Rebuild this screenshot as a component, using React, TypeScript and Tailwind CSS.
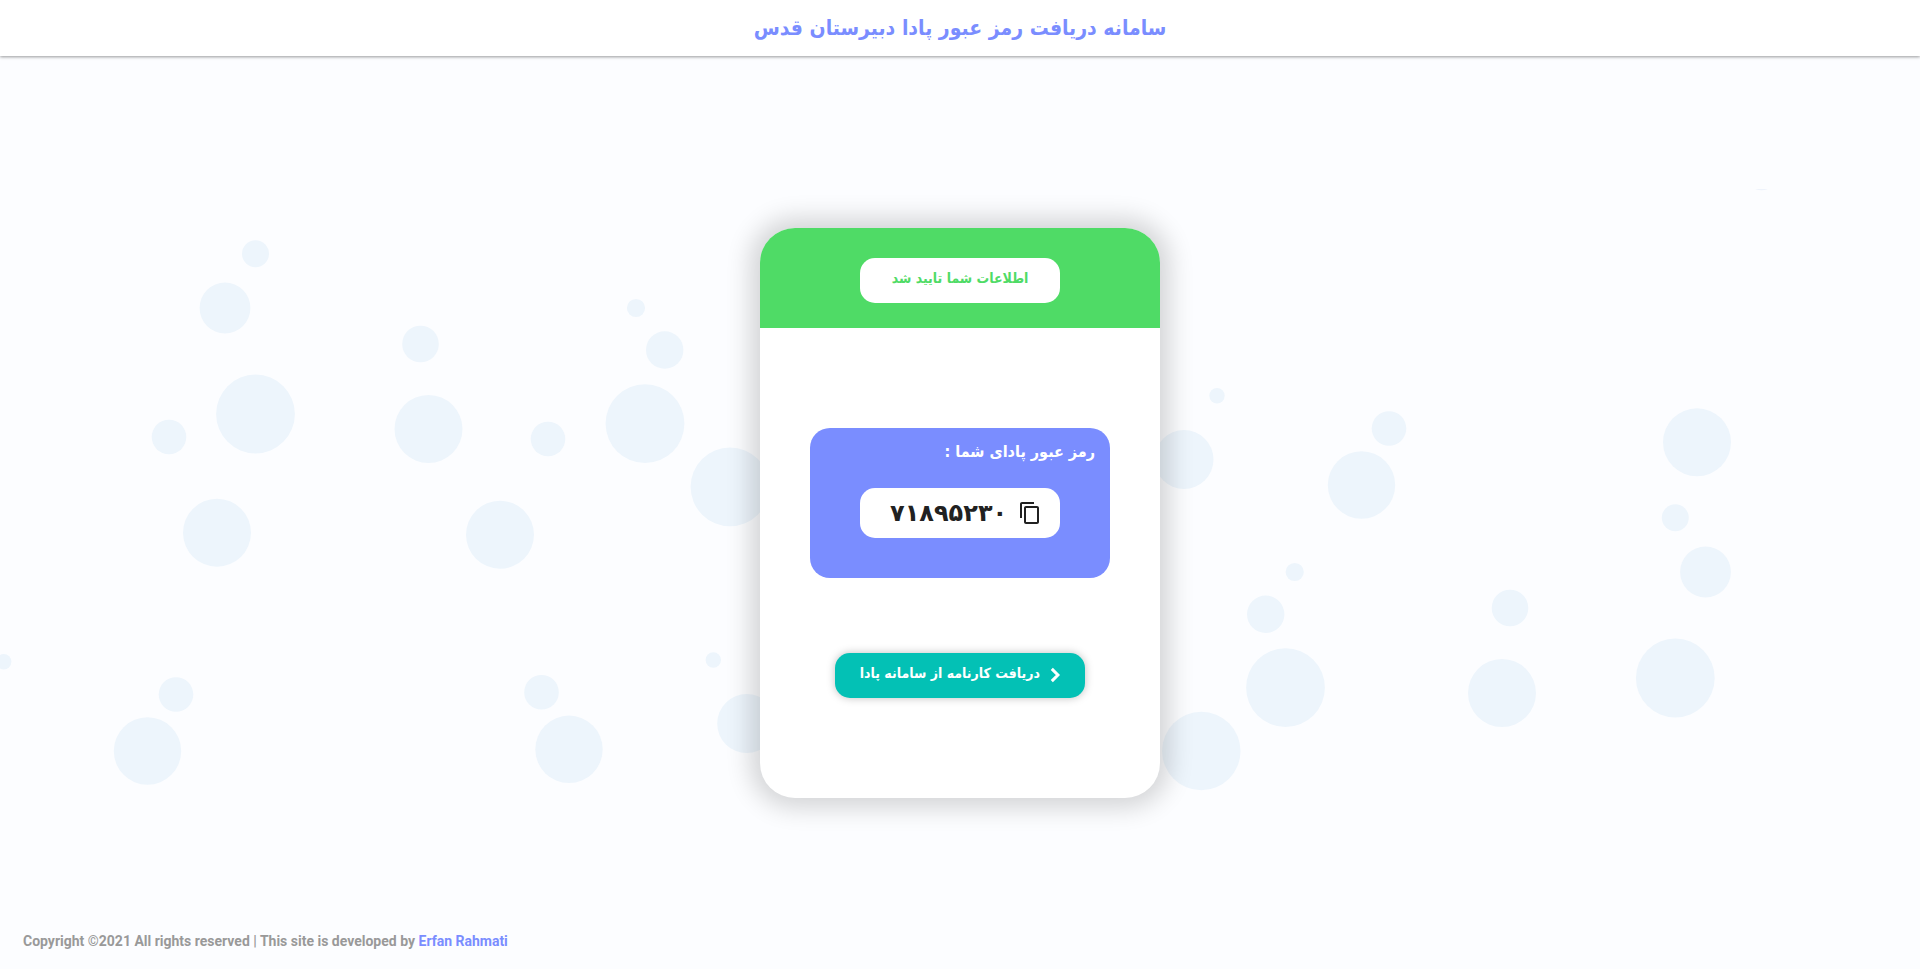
import { MdContentCopy } from "react-icons/md";

const bubbles: [number, number, number][] = [
  [255.5, 253.7, 13.5], [225, 308, 25.4], [420.5, 344, 18.3], [255.5, 414, 39.4],
  [169, 437, 17.3], [428.5, 429, 34], [548, 439, 17.3], [217, 532.7, 34],
  [500, 534.7, 34], [3.7, 661.7, 7.7], [176, 694.5, 17.3], [147.5, 751, 33.7],
  [541.5, 692.3, 17.3], [569, 749.3, 33.7], [636, 308, 9.1], [664.7, 350, 18.7],
  [645, 423.6, 39.4], [730, 486.8, 39.4], [713.3, 660, 7.7], [746.7, 723.6, 29.5],
  [1217, 395.7, 7.7], [1184, 459.5, 29.5], [1389, 428.5, 17.3], [1361.5, 485, 33.7],
  [1294.7, 572, 9.1], [1265.7, 614.3, 18.7], [1285.5, 687.7, 39.4], [1201.3, 751, 39.2],
  [1697, 442.3, 34], [1675.3, 517.7, 13.5], [1705.5, 572, 25.4], [1510, 608, 18.3],
  [1502, 693, 34], [1675.3, 678, 39.4],
];

function Background() {
  return (
    <svg
      aria-hidden="true"
      className="absolute inset-0 h-full w-full"
      viewBox="0 0 1920 969"
      preserveAspectRatio="xMidYMid slice"
    >
      {bubbles.map(([cx, cy, r]) => (
        <circle key={`${cx}-${cy}`} cx={cx} cy={cy} r={r} fill="#edf5fc" />
      ))}
      <path d="M1755 189h13q-6.500 2.500-13 0z" fill="#eef3fb" />
    </svg>
  );
}

function Chevron() {
  return (
    <svg aria-hidden="true" width="30" height="30" viewBox="0 0 30 30" className="shrink-0">
      <path d="M11.800 8.900 17.900 15l-6.100 6.100" fill="none" stroke="currentColor" strokeWidth="3" />
    </svg>
  );
}

export default function App() {
  return (
    <div
      lang="fa"
      className="relative flex min-h-screen flex-col bg-[#fcfdff] font-['DejaVu_Sans_Condensed','DejaVu_Sans','Noto_Sans',sans-serif] font-bold"
    >
      <Background />
      <header className="relative flex h-14 items-center justify-center bg-white shadow-[0_1px_3px_rgba(0,0,0,0.4)]">
        <h1 dir="rtl" className="text-[21px] leading-8 text-[#7a8dff]">
          سامانه دریافت رمز عبور پادا دبیرستان قدس
        </h1>
      </header>

      <div className="relative grid grow grid-rows-[1fr_auto_1fr]">
        <main className="row-start-2 flex w-[400px] max-w-full flex-col items-center justify-self-center overflow-hidden rounded-[35px] bg-white pb-[100px] shadow-[0_0_25px_10px_rgba(0,0,0,0.16)]">
          <div className="flex w-full justify-center bg-[#4fdb66] pt-[30px] pb-[25px]">
            <p
              dir="rtl"
              className="flex h-[45px] w-[200px] items-center justify-center rounded-[15px] bg-white pb-1 text-sm text-[#4fdb66]"
            >
              اطلاعات شما تایید شد
            </p>
          </div>

          <section className="mt-[100px] flex w-[300px] flex-col items-center rounded-[20px] bg-[#7a8dff] pb-10">
            <h2 dir="rtl" className="w-full px-[15px] pt-2 pb-5 text-base leading-8 text-white">
              رمز عبور پادای شما :
            </h2>
            <div className="flex h-[50px] w-[200px] items-center justify-between rounded-[15px] bg-white pr-[18px] pl-[30px] text-[#212121]">
              <span className="font-['DejaVu_Sans',sans-serif] text-2xl">۷۱۸۹۵۲۳۰</span>
              <button type="button" aria-label="کپی رمز عبور" className="cursor-pointer">
                <MdContentCopy size={24} />
              </button>
            </div>
          </section>

          <a
            href="#report"
            dir="rtl"
            className="mt-[75px] flex h-[45px] w-[250px] items-center rounded-[15px] bg-[#03c1b5] pr-[15px] text-sm whitespace-nowrap text-white shadow-[0_0_8px_rgba(0,0,0,0.25)]"
          >
            <Chevron />
            <span className="pb-1">دریافت کارنامه از سامانه پادا</span>
          </a>
        </main>

        <footer
          lang="en"
          className="row-start-3 self-end px-[23px] pb-[18px] font-['Roboto',sans-serif] text-sm leading-5 text-[#999]"
        >
          Copyright ©2021 All rights reserved | This site is developed by{" "}
          <a href="#developer" className="text-[#7a8dff]">
            Erfan Rahmati
          </a>
        </footer>
      </div>
    </div>
  );
}
